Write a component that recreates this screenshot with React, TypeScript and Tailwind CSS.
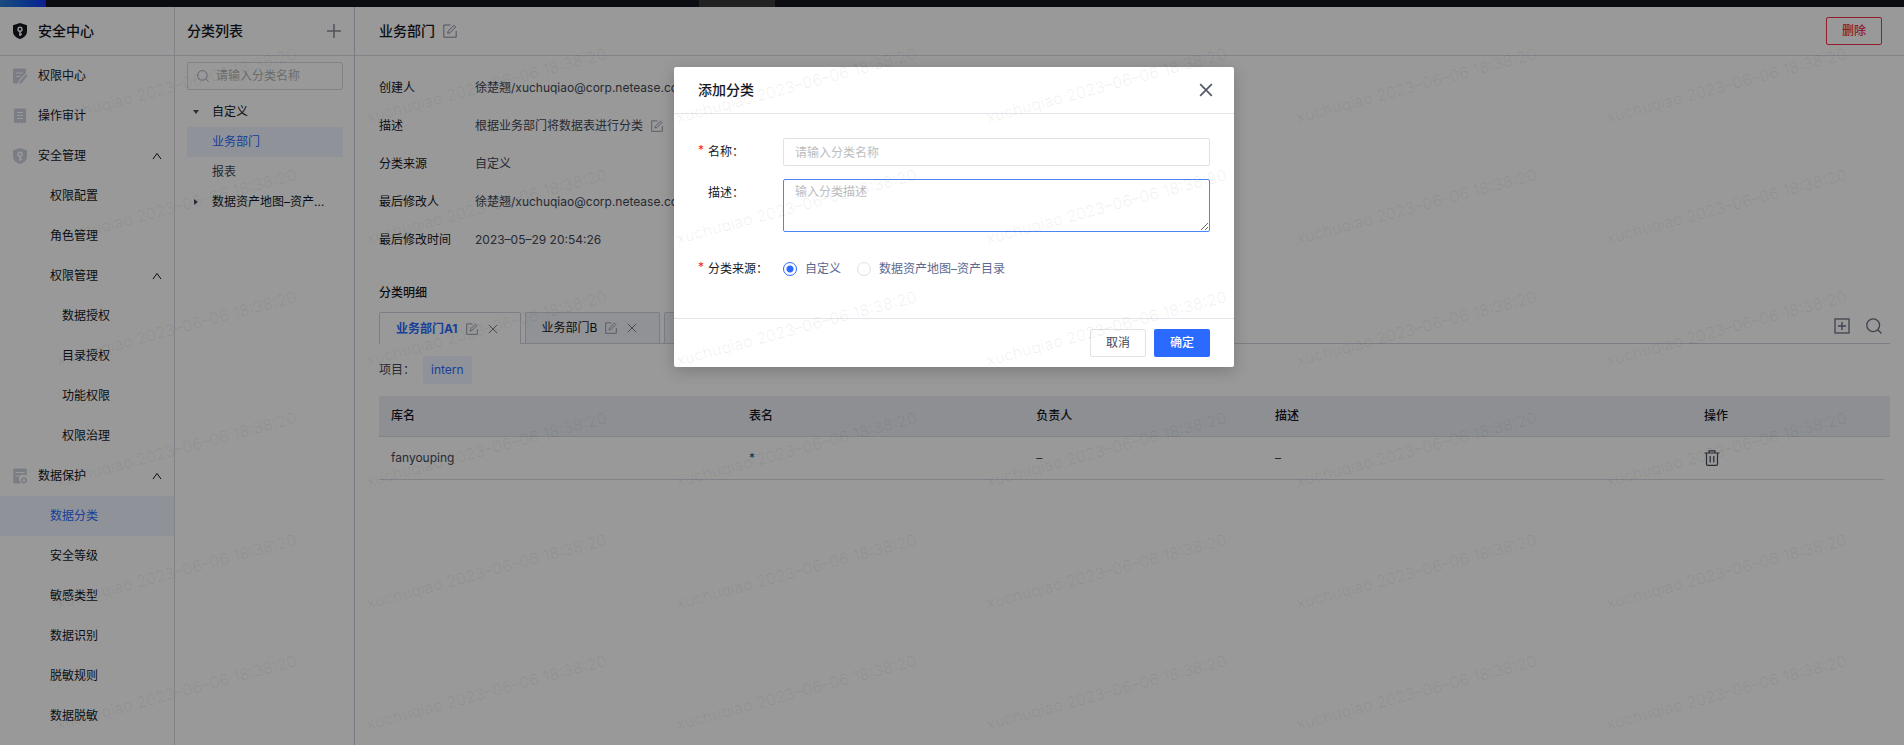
import React, { useState } from 'react';
import clsx from 'clsx';

interface MenuItem {
    label: string;
    level: 0 | 1 | 2;
    icon?: 'doc' | 'receipt' | 'shield' | 'data';
    expandable?: boolean;
}

const menuItems: MenuItem[] = [
    { label: '权限中心', level: 0, icon: 'doc' },
    { label: '操作审计', level: 0, icon: 'receipt' },
    { label: '安全管理', level: 0, icon: 'shield', expandable: true },
    { label: '权限配置', level: 1 },
    { label: '角色管理', level: 1 },
    { label: '权限管理', level: 1, expandable: true },
    { label: '数据授权', level: 2 },
    { label: '目录授权', level: 2 },
    { label: '功能权限', level: 2 },
    { label: '权限治理', level: 2 },
    { label: '数据保护', level: 0, icon: 'data', expandable: true },
    { label: '数据分类', level: 1 },
    { label: '安全等级', level: 1 },
    { label: '敏感类型', level: 1 },
    { label: '数据识别', level: 1 },
    { label: '脱敏规则', level: 1 },
    { label: '数据脱敏', level: 1 },
];

const details = [
    { label: '创建人', value: '徐楚翘/xuchuqiao@corp.netease.com' },
    { label: '描述', value: '根据业务部门将数据表进行分类', editable: true },
    { label: '分类来源', value: '自定义' },
    { label: '最后修改人', value: '徐楚翘/xuchuqiao@corp.netease.com' },
    { label: '最后修改时间', value: '2023–05–29 20:54:26' },
];

const tabs = ['业务部门A1', '业务部门B', '业务部门C'];

const WATERMARK = 'xuchuqiao 2023–06–06 18:38:20';

const ShieldIcon = ({ className }: { className?: string }) => (
    <svg viewBox="0 0 16 16" className={className}>
        <path fill="currentColor" fillRule="evenodd" d="M8 0l7 2.200v6.300c0 3.600-2.800 6-7 7.500-4.200-1.500-7-3.900-7-7.500V2.200L8 0zm0 3.500a2.800 2.800 0 0 0-.8 5.480V13h1.600v-1h1.200v-1.400H8.800V8.980A2.800 2.800 0 0 0 8 3.500zm0 1.500a1.300 1.300 0 1 1 0 2.600A1.300 1.300 0 0 1 8 5z" />
    </svg>
);

const MenuIcon = ({ name }: { name: MenuItem['icon'] }) => {
    if (name === 'shield') return <ShieldIcon className="size-4 text-[#cdd1de]" />;
    return (
        <svg viewBox="0 0 16 16" className="size-4 text-[#cdd1de]" fill="currentColor">
            {name === 'doc' && (
                <>
                    <path d="M2.500.5h10a1.500 1.500 0 0 1 1.500 1.500v2.800L6.500 12.500l-.5 3H2.500A1.500 1.500 0 0 1 1 14V2A1.500 1.500 0 0 1 2.500.5z" />
                    <path d="M14 6.300l1.500 1.500-6.300 7.700H7.500v-1.900L14 6.300z" />
                    <path d="M4 5h7M4 8.500h4.500" stroke="#fff" strokeWidth="1.200" />
                </>
            )}
            {name === 'receipt' && (
                <>
                    <path d="M3 .5h10a1 1 0 0 1 1 1v14l-2-1.300-2 1.300-2-1.300-2 1.300-2-1.300-2 1.300v-14a1 1 0 0 1 1-1z" />
                    <path d="M5 4.500h6M5 7.500h6M5 10.500h6" stroke="#fff" strokeWidth="1.100" />
                </>
            )}
            {name === 'data' && (
                <>
                    <path d="M2 .5h12a.8.8 0 0 1 .8.8V8A4 4 0 0 0 8 13.500l.8 2H2a.8.8 0 0 1-.8-.8V1.300A.8.8 0 0 1 2 .5z" />
                    <path d="M3.500 4.500h9M3.500 8h5" stroke="#fff" strokeWidth="1.100" />
                    <path fillRule="evenodd" d="M12 9l3 1.700v3.200L12 15.700l-3-1.800v-3.200L12 9zm0 2a1.400 1.400 0 1 0 0 2.800A1.400 1.400 0 0 0 12 11z" />
                </>
            )}
        </svg>
    );
};

const EditIcon = ({ className }: { className?: string }) => (
    <svg viewBox="0 0 14 14" className={className} fill="none" stroke="currentColor">
        <path d="M7.500 1H.8v12.200h12.400V7" />
        <path d="M4.700 9.300l.4-2.100L11 1.300l1.700 1.700-5.900 5.900-2.100.4z" />
    </svg>
);

const CrossIcon = ({ className, strokeWidth = 1 }: { className?: string; strokeWidth?: number }) => (
    <svg viewBox="0 0 12 12" className={className} fill="none" stroke="currentColor" strokeWidth={strokeWidth}>
        <path d="M1 1l10 10M11 1L1 11" />
    </svg>
);

const SearchIcon = ({ className }: { className?: string }) => (
    <svg viewBox="0 0 16 16" className={className} fill="none" stroke="currentColor" strokeWidth="1.300">
        <circle cx="7.200" cy="7.200" r="6.400" />
        <path d="M11.800 11.800l3.700 3.700" />
    </svg>
);

const Sidebar = () => (
    <aside className="w-[175px] shrink-0 border-r border-[#d9dbe3]">
        <div className="flex h-[49px] items-center gap-[10px] border-b border-[#d9dbe3] px-3">
            <ShieldIcon className="size-4 text-[#14171f]" />
            <h1 className="text-sm font-medium text-[#14171f]">安全中心</h1>
        </div>
        <nav>
            {menuItems.map(item => (
                <a
                    key={item.label}
                    href="#"
                    className={clsx(
                        'flex h-10 items-center pr-3',
                        item.level === 0 && 'gap-[10px] pl-3',
                        item.level === 1 && 'pl-[50px]',
                        item.level === 2 && 'pl-[62px]',
                        item.label === '数据分类' ? 'bg-[#eff6ff] text-[#2a6aff]' : 'text-[#14171f]'
                    )}
                >
                    {item.icon && <MenuIcon name={item.icon} />}
                    <span>{item.label}</span>
                    {item.expandable && (
                        <svg viewBox="0 0 10 8" className="ml-auto h-2 w-[10px]" fill="none" stroke="currentColor">
                            <path d="M1 7l4-5.500L9 7" />
                        </svg>
                    )}
                </a>
            ))}
        </nav>
    </aside>
);

const CategoryTree = () => (
    <section className="w-[180px] shrink-0 border-r border-[#c8cbd9]">
        <div className="flex h-[49px] items-center justify-between border-b border-[#d9dbe3] pr-[13px] pl-3">
            <h2 className="text-sm font-medium text-[#14171f]">分类列表</h2>
            <button type="button" aria-label="新增分类" className="text-[#858b9c]">
                <svg viewBox="0 0 14 14" className="size-[14px]" stroke="currentColor" strokeWidth="1.500">
                    <path d="M7 0v14M0 7h14" />
                </svg>
            </button>
        </div>
        <div className="pt-[6px] pr-[11px] pl-3">
            <label className="flex h-7 items-center gap-[7px] rounded-xs border border-[#d9dbe3] px-[9px]">
                <SearchIcon className="size-3 shrink-0 text-[#a5aabb]" />
                <input aria-label="搜索分类" placeholder="请输入分类名称" className="w-full min-w-0 outline-none placeholder:text-[#b5b5b5]" />
            </label>
            <ul className="mt-[7px] leading-[30px] text-[#14171f]">
                <li className="flex items-center pl-[6px]">
                    <svg viewBox="0 0 6 4" className="mr-[13px] h-1 w-[6px] fill-[#4a4f5e]"><path d="M0 0h6L3 4z" /></svg>
                    自定义
                </li>
                <li className="bg-[#eff6ff] pl-[25px] text-[#2a6aff]">业务部门</li>
                <li className="pl-[25px] text-[#434857]">报表</li>
                <li className="flex items-center pl-[7px]">
                    <svg viewBox="0 0 4 6" className="mr-[14px] h-[6px] w-1 shrink-0 fill-[#4a4f5e]"><path d="M0 0l4 3-4 3z" /></svg>
                    <span className="w-[118px] truncate">数据资产地图–资产目录</span>
                </li>
            </ul>
        </div>
    </section>
);

const CategoryDetail = () => (
    <main className="flex min-w-0 flex-1 flex-col">
        <header className="flex h-[49px] items-center border-b border-[#d9dbe3] pr-[22px] pl-6">
            <h2 className="text-sm font-medium text-[#14171f]">业务部门</h2>
            <button type="button" aria-label="编辑名称" className="ml-2 text-[#858b9c]">
                <EditIcon className="size-[14px]" />
            </button>
            <button type="button" className="ml-auto h-7 w-14 rounded-xs border border-[#f0324b] font-medium text-[#f0324b]">删除</button>
        </header>

        <div className="pt-[13px] pr-[14px] pl-6">
            <dl className="grid grid-cols-[96px_1fr] leading-[38px]">
                {details.map(d => (
                    <React.Fragment key={d.label}>
                        <dt className="text-[#14171f]">{d.label}</dt>
                        <dd className="flex items-center gap-2 text-[#434857]">
                            {d.value}
                            {d.editable && (
                                <button type="button" aria-label="编辑描述" className="text-[#858b9c]">
                                    <EditIcon className="size-3" />
                                </button>
                            )}
                        </dd>
                    </React.Fragment>
                ))}
            </dl>

            <h3 className="pt-6 pb-[10px] leading-[19px] font-medium text-[#14171f]">分类明细</h3>

            <div className="flex h-8 border-b border-[#d0d3de]">
                {tabs.map((tab, i) => (
                    <div
                        key={tab}
                        className={clsx(
                            'mr-1 flex items-center rounded-t-xs border-x border-t border-[#d0d3de] pr-[22px] pl-4',
                            i === 0 ? '-mb-px bg-white text-[#2a6aff]' : 'bg-[#f2f4f9] text-[#14171f]'
                        )}
                    >
                        <button type="button" className={i === 0 ? 'font-bold' : undefined}>{tab}</button>
                        <button type="button" aria-label={`编辑${tab}`} className="ml-2 text-[#858b9c]">
                            <EditIcon className="size-3" />
                        </button>
                        <button type="button" aria-label={`关闭${tab}`} className="ml-[10px] text-[#5b6172]">
                            <CrossIcon className="size-[10px]" />
                        </button>
                    </div>
                ))}
                <div className="ml-auto flex items-start gap-4 pt-[6px] pr-2 text-[#6a7086]">
                    <button type="button" aria-label="新增">
                        <svg viewBox="0 0 16 16" className="size-4" fill="none" stroke="currentColor">
                            <rect x="1" y="1" width="14" height="14" strokeWidth="1.300" />
                            <path d="M8 4v8M4 8h8" strokeWidth="1.400" />
                        </svg>
                    </button>
                    <button type="button" aria-label="搜索"><SearchIcon className="size-4" /></button>
                </div>
            </div>

            <div className="flex items-center py-3 text-[#434857]">
                <span className="w-11">项目：</span>
                <button type="button" className="h-7 rounded-xs bg-[#eff6ff] px-2 text-[#2a6aff]">intern</button>
            </div>

            <table className="w-full table-fixed text-left">
                <colgroup>
                    <col className="w-[23.700%]" />
                    <col className="w-[19%]" />
                    <col className="w-[15.800%]" />
                    <col className="w-[28.400%]" />
                    <col />
                    <col className="w-[6px]" />
                </colgroup>
                <thead className="bg-[#eceef6] text-[#14171f]">
                    <tr className="h-10 border-b border-[#d9dbe3]">
                        {['库名', '表名', '负责人', '描述', '操作'].map(h => (
                            <th key={h} className="px-3 font-medium">{h}</th>
                        ))}
                        <th className="p-0" />
                    </tr>
                </thead>
                <tbody className="text-[#434857]">
                    <tr className="h-[43px]">
                        {['fanyouping', '*', '–', '–'].map((cell, i) => (
                            <td key={i} className="border-b border-[#d9dbe3] px-3">{cell}</td>
                        ))}
                        <td className="border-b border-[#d9dbe3] px-3">
                            <button type="button" aria-label="删除库表" className="block">
                                <svg viewBox="0 0 16 16" className="size-4" fill="none" stroke="currentColor">
                                    <path d="M.5 3h15M5 3V.8h6V3M2.500 3v11.200c0 .7.500 1.200 1.200 1.200h8.600c.7 0 1.200-.5 1.200-1.200V3M6.200 6v6.500M9.800 6v6.500" strokeWidth="1.200" />
                                </svg>
                            </button>
                        </td>
                        <td className="p-0" />
                    </tr>
                </tbody>
            </table>
        </div>
    </main>
);

interface FieldLabelProps {
    htmlFor?: string;
    required?: boolean;
    children: React.ReactNode;
}

const FieldLabel = ({ htmlFor, required, children }: FieldLabelProps) => (
    <label htmlFor={htmlFor} className="flex w-[85px] shrink-0 leading-7 text-[#14171f]">
        <span className="w-[10px] leading-6 text-[#f5222d]">{required && '*'}</span>
        {children}
    </label>
);

const AddCategoryDialog = () => {
    const [source, setSource] = useState('custom');

    return (
        <div role="dialog" aria-modal="true" aria-labelledby="dialog-title" className="ml-1 w-[560px] rounded-xs bg-white shadow-[0_4px_16px_rgba(0,0,0,0.2)]">
            <div className="flex h-[47px] items-center justify-between border-b border-[#e3e5ea] pr-[21px] pl-6">
                <h2 id="dialog-title" className="text-sm font-medium text-[#14171f]">添加分类</h2>
                <button type="button" aria-label="关闭" className="text-[#545a69]">
                    <CrossIcon className="size-[14px]" strokeWidth={1.5} />
                </button>
            </div>
            <form className="px-6 pt-6" onSubmit={e => e.preventDefault()}>
                <div className="flex">
                    <FieldLabel htmlFor="name" required>名称：</FieldLabel>
                    <input id="name" placeholder="请输入分类名称" className="h-7 flex-1 rounded-xs border border-[#e0e2e8] px-[11px] outline-none placeholder:text-[#bdbdbd]" />
                </div>
                <div className="mt-[13px] flex">
                    <FieldLabel htmlFor="description">描述：</FieldLabel>
                    <textarea id="description" placeholder="输入分类描述" className="h-[53px] flex-1 resize rounded-xs border border-[#4a86f7] px-[11px] py-[2px] leading-5 outline-none placeholder:text-[#bdbdbd]" />
                </div>
                <div className="mt-[23px] flex h-[63px] items-start">
                    <FieldLabel required>分类来源：</FieldLabel>
                    <div role="radiogroup" aria-label="分类来源" className="flex gap-4 leading-7 text-[#5c6893]">
                        {[['custom', '自定义'], ['map', '数据资产地图–资产目录']].map(([value, label]) => (
                            <label key={value} className="flex items-center gap-2">
                                <input
                                    type="radio"
                                    name="source"
                                    checked={source === value}
                                    onChange={() => setSource(value)}
                                    className="size-[14px] appearance-none rounded-full border border-[#e0e2e8] checked:border-[#2a6aff] checked:bg-[radial-gradient(circle,#2a6aff_3px,transparent_4px)]"
                                />
                                {label}
                            </label>
                        ))}
                    </div>
                </div>
            </form>
            <div className="flex justify-end gap-2 border-t border-[#e3e5ea] px-6 py-[10px]">
                <button type="button" className="h-7 w-14 rounded-xs border border-[#e0e2e8] text-[#434857]">取消</button>
                <button type="button" className="h-7 w-14 rounded-xs bg-[#2a6aff] font-medium text-white">确定</button>
            </div>
        </div>
    );
};

const Watermark = () => (
    <div aria-hidden="true" className="pointer-events-none absolute inset-0 overflow-hidden">
        <div className="grid h-[734px] grid-cols-[repeat(6,310px)] grid-rows-6 pt-[5px] pl-[59px]">
            {Array.from({ length: 36 }, (_, i) => (
                <div key={i} className="flex items-end">
                    <span className="origin-bottom-left -rotate-15 text-base leading-5 whitespace-nowrap text-black/6">{WATERMARK}</span>
                </div>
            ))}
        </div>
    </div>
);

const App: React.FC = () => {
    return (
        <div className="relative flex min-h-screen flex-col overflow-hidden bg-white font-[Inter,'Noto_Sans_CJK_SC',sans-serif] text-xs">
            <div className="flex h-[7px] bg-[#14171f]">
                <div className="w-[46px] bg-linear-to-r from-[#2e7fd0] to-[#1a2df5]" />
                <div className="ml-[653px] w-[76px] bg-[#3a3a3a]" />
            </div>
            <div className="flex flex-1">
                <Sidebar />
                <CategoryTree />
                <CategoryDetail />
            </div>

            <div className="absolute inset-0 flex items-start justify-center bg-black/40 pt-[67px]">
                <AddCategoryDialog />
            </div>
            <Watermark />
        </div>
    );
};

export default App;
